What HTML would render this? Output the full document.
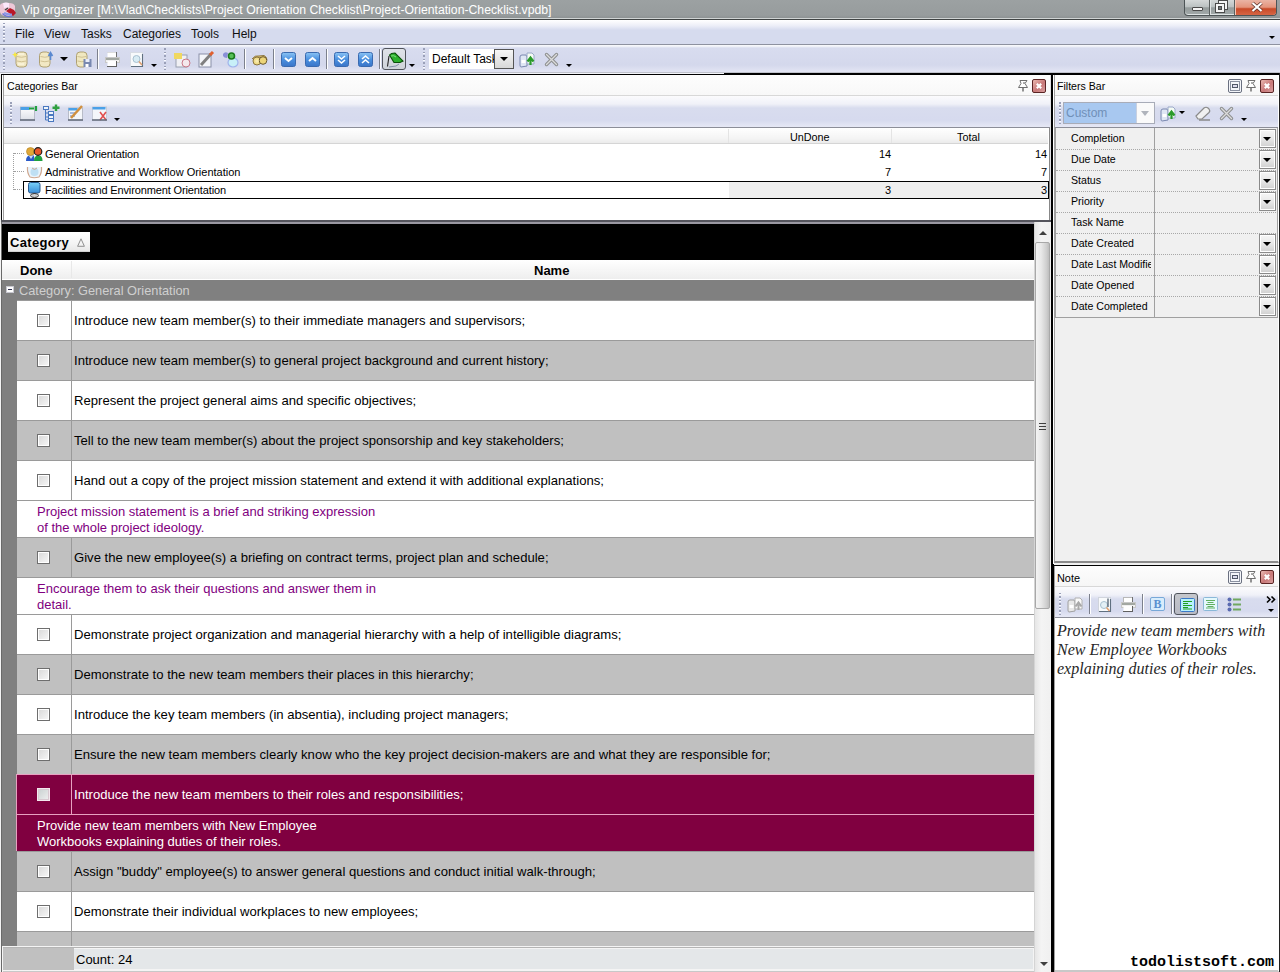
<!DOCTYPE html>
<html><head><meta charset="utf-8">
<style>
*{box-sizing:border-box;margin:0;padding:0}
html,body{width:1280px;height:972px;overflow:hidden;background:#f0f0f0;font-family:"Liberation Sans",sans-serif;font-size:12px;color:#000}
.a{position:absolute}
svg{position:absolute;overflow:visible}
#title{left:0;top:0;width:1280px;height:20px;background:linear-gradient(#9ca1a2,#979c9d 80%,#8e9394 94%);border-bottom:1px solid #404444;box-shadow:inset 0 -1px 0 #d0d4d4}
#menubar{left:0;top:20px;width:1280px;height:25px;background:linear-gradient(#ffffff 0,#f6f6fb 3px,#ebedf7 6px,#d6dbee 10px,#d6dbee 100%);border-bottom:1px solid #8e92a0}
#toolbar{left:0;top:45px;width:1280px;height:28px;background:linear-gradient(#f6f7fb 0,#f6f7fb 1px,#d8dcef 3px,#d4d8ec 20px,#e3e5f4 100%);border-bottom:1px solid #bfc2cc}
.menu{position:absolute;top:27px;font-size:12px;color:#101010}
.grip{position:absolute;width:2px;background:repeating-linear-gradient(#9aa0b8 0,#9aa0b8 1.5px,#fafbff 1.5px,#fafbff 2.2px,transparent 2.2px,transparent 3.5px)}
.sep{position:absolute;width:2px;background:#7c808c;border-right:1px solid #fff}
.dd{position:absolute;width:0;height:0;border-left:3px solid transparent;border-right:3px solid transparent;border-top:3px solid #000}
.txt{position:absolute;white-space:nowrap}
.row{position:absolute;left:17px;width:1017px;border-top:1px solid #9a9a9a}
.vl{position:absolute;left:54px;top:0;width:1px;height:100%}
.cb{position:absolute;left:37px;width:13px;height:13px;border:1px solid #6e6e6e;background:linear-gradient(135deg,#d8d8d8,#f8f8f8);box-shadow:inset 0 0 0 1px #fff}
.gt{position:absolute;left:74px;font-size:13.1px;line-height:15px;white-space:nowrap}
.nt{position:absolute;left:37px;font-size:13px;line-height:16px;white-space:nowrap}
.fbtn{position:absolute;left:1259px;width:17px;height:19px;border:1px solid #8a8a8a;background:linear-gradient(#f6f6f6,#e8e8e8 50%,#d0d0d0);box-shadow:inset 1px 1px 0 #fff,inset -1px -1px 0 #fff}
</style></head><body>
<svg width="0" height="0" style="position:absolute"><defs><linearGradient id="bg1" x1="0" y1="0" x2="0" y2="1"><stop offset="0" stop-color="#8cc4f4"/><stop offset="0.5" stop-color="#4a90e0"/><stop offset="1" stop-color="#3a74c8"/></linearGradient><linearGradient id="gw" x1="0" y1="0" x2="0" y2="1"><stop offset="0" stop-color="#ffffff"/><stop offset="1" stop-color="#dde0e8"/></linearGradient></defs></svg>
<!-- TITLE -->
<div class="a" id="title"></div>
<svg style="left:0px;top:2px" width="17" height="15" viewBox="0 0 17 15">
 <path d="M0 3 Q2 0 9 1 Q14 1 15 4 L15 10 Q12 14 6 14 Q1 14 0 10 Z" fill="#ecc8d8"/>
 <path d="M3 1 Q6 0 9 1 L9 5 L4 6 Z" fill="#fbe8fb"/>
 <path d="M5 8 L8 6" stroke="#404040" stroke-width="1.5"/>
 <path d="M6 9 L10 6 L14 8 L16 11 L13 14 L9 11 Z" fill="#b81828"/>
 <path d="M3 11 Q7 15 13 14 L12 15 Q6 16 2 12 Z" fill="#6a78d8"/>
 <path d="M4 11 Q8 13 12 12.5" stroke="#8a98e8" stroke-width="2" fill="none"/>
</svg>
<div class="txt" style="left:22px;top:3px;font-size:12.24px;color:#fff;letter-spacing:0px">Vip organizer [M:\Vlad\Checklists\Project Orientation Checklist\Project-Orientation-Checklist.vpdb]</div>
<!-- window buttons -->
<div class="a" style="left:1184px;top:0;width:93px;height:16px;border:1px solid #4d5456;border-top:none;border-radius:0 0 4px 4px;background:linear-gradient(#d4d8d8 0,#bcc2c2 45%,#959c9c 52%,#a2a9a9 100%);overflow:hidden;box-shadow:inset 0 -1px 0 #dfe4e4">
  <div class="a" style="left:24px;top:0;width:1px;height:16px;background:#5a6060"></div>
  <div class="a" style="left:25px;top:0;width:1px;height:16px;background:#e0e4e4"></div>
  <div class="a" style="left:49px;top:0;width:1px;height:16px;background:#5a6060"></div>
  <div class="a" style="left:50px;top:0;width:42px;height:16px;background:linear-gradient(#eab4a4 0,#e4947c 45%,#c84a28 55%,#d86a4a 100%);box-shadow:inset 1px 0 0 #f4c8b8"></div>
  <div class="a" style="left:7px;top:7px;width:11px;height:4px;background:#f4f4f4;border:1px solid #4a4a4a;border-radius:1px"></div>
  <div class="a" style="left:34px;top:1px;width:8px;height:8px;border:2px solid #f4f4f4;outline:1px solid #4a4a4a;background:transparent"></div>
  <div class="a" style="left:31px;top:4px;width:8px;height:8px;border:2px solid #f4f4f4;background:#707878;outline:1px solid #4a4a4a;box-shadow:inset 0 0 0 1px #4a4a4a"></div>
  <svg style="left:66px;top:2px" width="12" height="10" viewBox="0 0 12 10"><path d="M1.5 1 L10.5 9 M10.5 1 L1.5 9" stroke="#5a3028" stroke-width="3.6"/><path d="M1.5 1 L10.5 9 M10.5 1 L1.5 9" stroke="#fff" stroke-width="2.2"/></svg>
</div>

<!-- MENU -->
<div class="a" id="menubar"></div>
<div class="grip" style="left:3px;top:23px;height:19px"></div>
<div class="menu" style="left:15px">File</div>
<div class="menu" style="left:44px">View</div>
<div class="menu" style="left:81px">Tasks</div>
<div class="menu" style="left:123px">Categories</div>
<div class="menu" style="left:191px">Tools</div>
<div class="menu" style="left:232px">Help</div>
<div class="dd" style="left:1269px;top:36px"></div>

<!-- TOOLBAR -->
<div class="a" id="toolbar"></div>
<div class="grip" style="left:3px;top:48px;height:22px"></div>
<div class="grip" style="left:164px;top:48px;height:22px"></div>
<div class="grip" style="left:423px;top:48px;height:22px"></div>
<div class="sep" style="left:97px;top:49px;height:20px"></div>
<div class="sep" style="left:244px;top:49px;height:20px"></div>
<div class="sep" style="left:273px;top:49px;height:20px"></div>
<div class="sep" style="left:326px;top:49px;height:20px"></div>
<div class="sep" style="left:379px;top:49px;height:20px"></div>
<div class="dd" style="left:60px;top:57px;border-width:4px 4px 0 4px;border-top-color:#000"></div>
<div class="dd" style="left:151px;top:64px"></div>
<div class="dd" style="left:409px;top:64px"></div>
<div class="dd" style="left:566px;top:64px"></div>
<!-- db icons -->
<svg style="left:12px;top:51px" width="16" height="17" viewBox="0 0 16 17">
 <rect x="4" y="1" width="11" height="15" rx="3.5" fill="#f2e8c4" stroke="#a89868" stroke-width="0.9"/>
 <path d="M5 5.5 Q9.5 7 14 5.5 M5 10 Q9.5 11.5 14 10" stroke="#c8b888" fill="none" stroke-width="0.8"/>
 <path d="M6 3 H12 M6 13 H12" stroke="#fffbe8" stroke-width="1"/>
 <path d="M3 0.5 L4 3 L6.5 3.5 L4 4.5 L3 7 L2 4.5 L0 3.5 L2 3 Z" fill="#f8e840"/>
</svg>
<svg style="left:39px;top:51px" width="14" height="17" viewBox="0 0 14 17">
 <rect x="0.5" y="1" width="10.5" height="15" rx="3.5" fill="#f2e8c4" stroke="#a89868" stroke-width="0.9"/>
 <path d="M1.5 5.5 Q6 7 10 5.5 M1.5 10 Q6 11.5 10 10" stroke="#c8b888" fill="none" stroke-width="0.8"/>
 <path d="M11.5 9 V2.5 M9.5 5 L11.5 1.5 L13.5 5" stroke="#5a88d0" stroke-width="1.6" fill="none"/>
</svg>
<svg style="left:76px;top:51px" width="16" height="17" viewBox="0 0 16 17">
 <rect x="0.5" y="1" width="10.5" height="15" rx="3.5" fill="#f0e8c0" stroke="#a89868" stroke-width="0.9"/>
 <path d="M1.5 5.5 Q6 7 10 5.5 M1.5 10 Q6 11.5 10 10" stroke="#c8b888" fill="none" stroke-width="0.8"/>
 <rect x="7.5" y="8" width="8" height="8" fill="#7888b0"/><rect x="9.5" y="8" width="4" height="3" fill="#e8ecf8"/><rect x="9.5" y="13" width="3" height="3" fill="#fff"/>
</svg>
<svg style="left:105px;top:51px" width="15" height="16" viewBox="0 0 15 16">
 <path d="M2.5 1.5 H11.5 V6" fill="#fff" stroke="#b8b8b8"/><rect x="2.5" y="1.5" width="9" height="5" fill="#fff"/><path d="M11.5 1 V6" stroke="#707070"/>
 <rect x="0.5" y="6.5" width="14" height="5" fill="#f0f0f0" stroke="#c8c8c8"/>
 <path d="M1 8 H14" stroke="#8a9088" stroke-width="1.5"/>
 <rect x="2.5" y="10" width="9" height="5" fill="#fff"/><path d="M2 15.5 H12 M11.5 10 V15.5" stroke="#606060"/>
</svg>
<svg style="left:130px;top:51px" width="14" height="16" viewBox="0 0 14 16">
 <rect x="0.5" y="1.5" width="12" height="14" fill="#f8fafc" stroke="#d8dce4"/>
 <path d="M12.5 3 V15.5 H1" stroke="#607080" stroke-width="1.1" fill="none"/>
 <circle cx="6.5" cy="8" r="3.5" fill="#d8ecf4" stroke="#a8c0d0"/>
 <path d="M9 10.5 L12 14" stroke="#e0a070" stroke-width="1.6"/>
</svg>
<svg style="left:174px;top:51px" width="17" height="17" viewBox="0 0 17 17">
 <rect x="2" y="4" width="11" height="12" fill="#f0f0f4" stroke="#9aa0b0"/>
 <path d="M0 2 H8 V8 H0 Z" fill="#f0d860"/>
 <circle cx="12" cy="12" r="4" fill="#f4e8ec" stroke="#c87888"/>
</svg>
<svg style="left:198px;top:51px" width="17" height="17" viewBox="0 0 17 17">
 <rect x="1" y="3" width="12" height="13" fill="#f4f6fa" stroke="#8a90a8"/>
 <path d="M3 14 L13 3" stroke="#808080" stroke-width="3"/>
 <path d="M12 4 L15 1" stroke="#e06030" stroke-width="3"/>
</svg>
<svg style="left:222px;top:51px" width="17" height="17" viewBox="0 0 17 17">
 <ellipse cx="11" cy="11.5" rx="5" ry="4.5" fill="#c8f0f8" stroke="#a0b4ec" stroke-width="1.2"/>
 <path d="M1 3 Q3 0 6 2 L5 7 Q2 7 1 5 Z" fill="#8a90d8"/>
 <circle cx="9.5" cy="5" r="3" fill="#58c058" stroke="#1a7a1a" stroke-width="1.6"/>
</svg>
<svg style="left:251px;top:54px" width="17" height="12" viewBox="0 0 17 12">
 <path d="M1 5 Q4 1 8 2 L13 1.5 Q16 3 16 6" fill="#e8cc70" stroke="#8a7440" stroke-width="1"/>
 <circle cx="6" cy="7" r="4" fill="#f0dc88" stroke="#8a7440" stroke-width="1"/>
 <circle cx="12" cy="6.5" r="3.8" fill="#ecd478" stroke="#6a5830" stroke-width="1"/>
 <circle cx="6" cy="7" r="1.8" fill="#f8eab0"/>
</svg>
<!-- blue arrow buttons -->
<svg style="left:281px;top:52px" width="15" height="15" viewBox="0 0 15 15"><rect x="0.5" y="0.5" width="14" height="14" rx="2" fill="url(#bg1)" stroke="#3a6ab0"/><path d="M4 6 L7.5 9 L11 6" stroke="#fff" stroke-width="2" fill="none"/></svg>
<svg style="left:305px;top:52px" width="15" height="15" viewBox="0 0 15 15"><rect x="0.5" y="0.5" width="14" height="14" rx="2" fill="url(#bg1)" stroke="#3a6ab0"/><path d="M4 9 L7.5 6 L11 9" stroke="#fff" stroke-width="2" fill="none"/></svg>
<svg style="left:334px;top:52px" width="15" height="15" viewBox="0 0 15 15"><rect x="0.5" y="0.5" width="14" height="14" rx="2" fill="url(#bg1)" stroke="#3a6ab0"/><path d="M4 4 L7.5 7 L11 4 M4 8 L7.5 11 L11 8" stroke="#fff" stroke-width="1.6" fill="none"/></svg>
<svg style="left:358px;top:52px" width="15" height="15" viewBox="0 0 15 15"><rect x="0.5" y="0.5" width="14" height="14" rx="2" fill="url(#bg1)" stroke="#3a6ab0"/><path d="M4 7 L7.5 4 L11 7 M4 11 L7.5 8 L11 11" stroke="#fff" stroke-width="1.6" fill="none"/></svg>
<!-- pressed green button -->
<div class="a" style="left:382px;top:48px;width:24px;height:22px;border:1px solid #50545c;border-radius:3px;background:linear-gradient(#dfe2e8,#cfd3da)"></div>
<svg style="left:386px;top:51px" width="18" height="17" viewBox="0 0 18 17">
 <path d="M3.5 4 Q5 2 9 2 L17 10 L14 11.5 L8 11.5 Z" fill="#2cb02c" stroke="#0a500a" stroke-width="1.1"/>
 <path d="M5 5 Q8 4 10 6" stroke="#80e080" fill="none"/>
 <path d="M3 5 L1.5 15.5" stroke="#202020" stroke-width="1.1"/>
 <path d="M3 16 L10 15 L13 13" stroke="#8090a8" fill="none"/>
</svg>
<!-- combo -->
<div class="a" style="left:429px;top:49px;width:85px;height:20px;background:#fff;overflow:hidden">
  <div class="txt" style="left:3px;top:3px;font-size:12px">Default Task</div>
</div>
<div class="a" style="left:494px;top:49px;width:20px;height:20px;border:1px solid #555;background:linear-gradient(#f6f6f6,#d8d8d8)"></div>
<div class="dd" style="left:500px;top:57px;border-width:4px 4px 0 4px"></div>
<svg style="left:519px;top:51px" width="17" height="17" viewBox="0 0 17 17">
 <path d="M1 6 Q1 4 3 4 L7 4 L8 6 L8 15 L2 16 Q1 16 1 14 Z" fill="#dfe6f4" stroke="#7a88b0"/>
 <rect x="2.5" y="9" width="4" height="3" fill="#fff"/>
 <path d="M8 2 L13 2 L15 4 L15 13 L8 13 Z" fill="#f4fbf4" stroke="#9aa8c8"/>
 <path d="M11.5 14 V8.5 M8.5 10.5 L11.5 6.5 L14.5 10.5" stroke="#2a9a2a" stroke-width="2.2" fill="none"/>
</svg>
<svg style="left:545px;top:53px" width="13" height="13" viewBox="0 0 13 13"><path d="M1.5 1.5 L11.5 11.5 M11.5 1.5 L1.5 11.5" stroke="#8e9090" stroke-width="3.4" stroke-linecap="round"/><path d="M1.5 1.5 L11.5 11.5 M11.5 1.5 L1.5 11.5" stroke="#dcdcdc" stroke-width="1.3" stroke-linecap="round"/></svg>


<!-- ============ CATEGORIES PANEL ============ -->
<div class="a" style="left:0;top:73px;width:1053px;height:1px;background:#f4f5fa"></div><div class="a" style="left:1px;top:74px;width:1052px;height:1px;background:#000"></div>
<div class="a" style="left:724px;top:73px;width:556px;height:1px;background:#000"></div>
<div class="a" style="left:1px;top:75px;width:1px;height:147px;background:#101010"></div>
<div class="a" style="left:1051px;top:73px;width:2px;height:899px;background:#000"></div>
<div class="a" style="left:2px;top:75px;width:1049px;height:146px;background:#fff;border-left:1px solid #fff;border-right:1px solid #e0e0e4;box-shadow:inset 1px 0 0 #a0a0a0, inset -1px 0 0 #888"></div>
<!-- caption -->
<div class="a" style="left:4px;top:75px;width:1046px;height:21px;background:linear-gradient(#fdfdfd,#f8f8f8);border-bottom:1px solid #d8d8d8"></div>
<div class="txt" style="left:7px;top:80px;font-size:10.6px">Categories Bar</div>
<svg style="left:1017px;top:80px" width="12" height="12" viewBox="0 0 12 12"><path d="M3 0.5 H10 L8 3.5 L10.5 7.5 H1.5 L4 3.5 Z" fill="#fff" stroke="#707070"/><path d="M6 7.5 V11.5" stroke="#707070" stroke-width="1.5"/><circle cx="7" cy="3" r="1" fill="#909090"/></svg>
<div class="a" style="left:1032px;top:79px;width:14px;height:14px;border:1px solid #5a2424;border-radius:2px;background:linear-gradient(135deg,#eab8b0,#c87878 55%,#d8a0a0)"></div>
<svg style="left:1035px;top:82px" width="8" height="8" viewBox="0 0 8 8"><path d="M1.8 1.8 L6.2 6.2 M6.2 1.8 L1.8 6.2" stroke="#fff" stroke-width="2.2"/></svg>
<!-- toolbar -->
<div class="a" style="left:4px;top:96px;width:1046px;height:32px;background:linear-gradient(#fbfbfd 0,#f0f1f8 8px,#d8dcee 12px,#d6daee 24px,#e6e8f5 31px);border-bottom:1px solid #8c8e98"></div>
<div class="grip" style="left:10px;top:102px;height:22px"></div>
<svg style="left:20px;top:104px" width="16" height="17" viewBox="0 0 16 17">
 <rect x="0.5" y="3" width="14" height="13" fill="url(#gw)" stroke="#b8bcc8"/>
 <rect x="0.5" y="3" width="9" height="3" fill="#4aa0e8"/>
 <path d="M16 2 V7 M9 4.5 H14" stroke="#20a040" stroke-width="2.2"/>
 <path d="M0 16 H15" stroke="#606878" stroke-width="1.5"/>
</svg>
<svg style="left:43px;top:104px" width="17" height="18" viewBox="0 0 17 18">
 <g fill="#eef4fa" stroke="#4a78c0" stroke-width="1"><rect x="0.5" y="2.5" width="5" height="3"/><rect x="5.5" y="7.5" width="5" height="3"/><rect x="5.5" y="11.5" width="5" height="3"/><rect x="5.5" y="14.5" width="5" height="3"/></g>
 <path d="M2.5 5.5 V16 H5.5 M2.5 9 H5.5 M2.5 13 H5.5" stroke="#4a78c0" fill="none"/>
 <path d="M13 0.5 V7 M9.5 3.8 H16.5" stroke="#30a040" stroke-width="2.4"/>
</svg>
<svg style="left:68px;top:104px" width="16" height="17" viewBox="0 0 16 17">
 <rect x="0.5" y="4" width="14" height="12" fill="#f4f6fa" stroke="#b8bcc8"/>
 <rect x="0.5" y="4" width="9" height="2.5" fill="#4aa0e8"/>
 <path d="M2 9 H7 M2 12 H7" stroke="#6080c0"/>
 <path d="M3 14 L14 2" stroke="#d09040" stroke-width="2.5"/>
 <path d="M0 16 H15" stroke="#606878" stroke-width="1.5"/>
</svg>
<svg style="left:92px;top:104px" width="16" height="17" viewBox="0 0 16 17">
 <rect x="0.5" y="3" width="14" height="13" fill="#f4f6fa" stroke="#c8ccd8"/>
 <rect x="0.5" y="3" width="13" height="2.5" fill="#4aa0e8"/>
 <path d="M8 8 L14 16 M14 8 L8 16" stroke="#e05050" stroke-width="1.6"/>
 <path d="M0 16 H15" stroke="#606878" stroke-width="1.5"/>
</svg>
<div class="dd" style="left:114px;top:118px"></div>
<!-- tree header -->
<div class="a" style="left:4px;top:128px;width:1044px;height:16px;background:linear-gradient(#ffffff,#f4f4f4 70%,#ebebeb);border-bottom:1px solid #d5d5d5"></div>
<div class="a" style="left:728px;top:129px;width:1px;height:14px;background:#e4e4e4"></div>
<div class="a" style="left:891px;top:129px;width:1px;height:14px;background:#e4e4e4"></div>
<div class="txt" style="left:790px;top:131px;font-size:10.8px">UnDone</div>
<div class="txt" style="left:957px;top:131px;font-size:10.8px">Total</div>
<!-- tree lines -->
<div class="a" style="left:13px;top:153px;width:1px;height:37px;border-left:1px dotted #a0a0a0"></div>
<div class="a" style="left:14px;top:153px;width:10px;height:1px;border-top:1px dotted #a0a0a0"></div>
<div class="a" style="left:14px;top:171px;width:10px;height:1px;border-top:1px dotted #a0a0a0"></div>
<div class="a" style="left:14px;top:189px;width:10px;height:1px;border-top:1px dotted #a0a0a0"></div>
<!-- selection -->
<div class="a" style="left:23px;top:181px;width:1026px;height:18px;border:1px solid #000;background:#fff"></div>
<div class="a" style="left:729px;top:182px;width:319px;height:16px;background:#efefef"></div>
<!-- icons -->
<svg style="left:26px;top:147px" width="17" height="15" viewBox="0 0 17 15">
 <path d="M0 14 Q0 8.5 4 8.5 L8 8.5 Q8.5 14 8.5 14 Z" fill="#2a5ac8"/>
 <path d="M8 14 Q8 8.5 12 8.5 L13 8.5 Q16.5 8.5 16.5 14 Z" fill="#20a040"/>
 <path d="M3 9 L5 12 L7 9" fill="#c8d8f0"/>
 <circle cx="4.5" cy="4.5" r="4" fill="#e0a838" stroke="#b08020" stroke-width="0.6"/>
 <circle cx="12" cy="4.5" r="3.8" fill="#e8582a" stroke="#202020" stroke-width="1.2"/>
</svg>
<svg style="left:26px;top:165px" width="17" height="14" viewBox="0 0 17 14">
 <path d="M1.5 2 Q1 8 4 12 Q8 13.5 13 12 Q16 8 15.5 2" fill="#e8f4fc" stroke="#d0a890" stroke-width="1.2"/>
 <circle cx="8.5" cy="7" r="4" fill="#bfe0f4"/>
 <path d="M6 3 Q8.5 6 11 3" stroke="#d0a890" fill="none"/>
</svg>
<svg style="left:28px;top:182px" width="13" height="16" viewBox="0 0 13 16">
 <defs><linearGradient id="scr" x1="0" y1="0" x2="0" y2="1"><stop offset="0" stop-color="#78d0f8"/><stop offset="1" stop-color="#3a8ed8"/></linearGradient></defs>
 <rect x="0.5" y="0.5" width="11.5" height="10.5" rx="2" fill="url(#scr)" stroke="#2a5a90"/>
 <ellipse cx="6.5" cy="13.5" rx="4" ry="2" fill="#d0d0d0" stroke="#404040"/>
 <path d="M6.5 11 V12" stroke="#404040" stroke-width="2"/>
</svg>
<div class="txt" style="left:45px;top:148px;font-size:11px;letter-spacing:-0.1px">General Orientation</div>
<div class="txt" style="left:45px;top:166px;font-size:11px">Administrative and Workflow Orientation</div>
<div class="txt" style="left:45px;top:184px;font-size:11px;letter-spacing:-0.13px">Facilities and Environment Orientation</div>
<div class="txt" style="left:879px;top:148px;font-size:11px">14</div>
<div class="txt" style="left:1035px;top:148px;font-size:11px">14</div>
<div class="txt" style="left:885px;top:166px;font-size:11px">7</div>
<div class="txt" style="left:1041px;top:166px;font-size:11px">7</div>
<div class="txt" style="left:885px;top:184px;font-size:11px">3</div>
<div class="txt" style="left:1041px;top:184px;font-size:11px">3</div>
<!-- bottom border -->
<div class="a" style="left:1px;top:220px;width:1050px;height:4px;background:linear-gradient(#55555d 0,#55555d 50%,#9a98a2 50%,#9a98a2 100%)"></div>


<!-- ============ MAIN GRID ============ -->
<div class="a" style="left:0;top:222px;width:1px;height:750px;background:#f4f4f4"></div>
<div class="a" style="left:1px;top:222px;width:1px;height:750px;background:#6a6a6a"></div>
<div class="a" style="left:2px;top:224px;width:1032px;height:36px;background:#000"></div>
<div class="a" style="left:8px;top:232px;width:82px;height:20px;background:linear-gradient(#fff,#f4f4f4 60%,#e8e8e8);border-bottom:1px solid #d0d0d0"></div>
<div class="txt" style="left:10px;top:235px;font-size:13px;font-weight:bold;letter-spacing:0.35px">Category</div>
<svg style="left:77px;top:238px" width="8" height="9" viewBox="0 0 8 9"><path d="M4 0.8 L7.4 8.3 H0.6 Z" fill="none" stroke="#909090"/></svg>
<div class="a" style="left:2px;top:260px;width:1032px;height:20px;background:linear-gradient(#ffffff,#f8f8f8 40%,#eeeeee);border-bottom:1px solid #d8d8d8"></div>
<div class="a" style="left:2px;top:279px;width:1032px;height:1px;background:#fff"></div>
<div class="a" style="left:71px;top:261px;width:1px;height:17px;background:#e8e8e8"></div>
<div class="txt" style="left:20px;top:263px;font-size:13px;font-weight:bold">Done</div>
<div class="txt" style="left:534px;top:263px;font-size:13px;font-weight:bold">Name</div>
<div class="a" style="left:2px;top:280px;width:1032px;height:20px;background:#808080"></div>
<div class="a" style="left:6px;top:286px;width:8px;height:7px;background:#fff;border:1px solid #c8c8d0"></div>
<div class="a" style="left:8px;top:289px;width:4px;height:1px;background:#303050"></div>
<div class="txt" style="left:19px;top:283px;font-size:12.8px;color:#cfcfcf">Category: General Orientation</div>
<div class="a" style="left:2px;top:300px;width:15px;height:646px;background:#808080"></div>
<div class="row" style="top:300px;height:40px;background:#fff;border-top-color:#9a9a9a"><div class="vl" style="background:#9a9a9a"></div></div>
<div class="cb" style="top:314px"></div>
<div class="gt" style="top:313px;color:#000">Introduce new team member(s) to their immediate managers and supervisors;</div>
<div class="row" style="top:340px;height:40px;background:#c0c0c0;border-top-color:#9a9a9a"><div class="vl" style="background:#9a9a9a"></div></div>
<div class="cb" style="top:354px"></div>
<div class="gt" style="top:353px;color:#000">Introduce new team member(s) to general project background and current history;</div>
<div class="row" style="top:380px;height:40px;background:#fff;border-top-color:#9a9a9a"><div class="vl" style="background:#9a9a9a"></div></div>
<div class="cb" style="top:394px"></div>
<div class="gt" style="top:393px;color:#000">Represent the project general aims and specific objectives;</div>
<div class="row" style="top:420px;height:40px;background:#c0c0c0;border-top-color:#9a9a9a"><div class="vl" style="background:#9a9a9a"></div></div>
<div class="cb" style="top:434px"></div>
<div class="gt" style="top:433px;color:#000">Tell to the new team member(s) about the project sponsorship and key stakeholders;</div>
<div class="row" style="top:460px;height:40px;background:#fff;border-top-color:#9a9a9a"><div class="vl" style="background:#9a9a9a"></div></div>
<div class="cb" style="top:474px"></div>
<div class="gt" style="top:473px;color:#000">Hand out a copy of the project mission statement and extend it with additional explanations;</div>
<div class="row" style="top:500px;height:37px;background:#fff;border-top-color:#9a9a9a"></div>
<div class="nt" style="top:504px;color:#800080">Project mission statement is a brief and striking expression<br>of the whole project ideology.</div>
<div class="row" style="top:537px;height:40px;background:#c0c0c0;border-top-color:#9a9a9a"><div class="vl" style="background:#9a9a9a"></div></div>
<div class="cb" style="top:551px"></div>
<div class="gt" style="top:550px;color:#000">Give the new employee(s) a briefing on contract terms, project plan and schedule;</div>
<div class="row" style="top:577px;height:37px;background:#fff;border-top-color:#9a9a9a"></div>
<div class="nt" style="top:581px;color:#800080">Encourage them to ask their questions and answer them in<br>detail.</div>
<div class="row" style="top:614px;height:40px;background:#fff;border-top-color:#9a9a9a"><div class="vl" style="background:#9a9a9a"></div></div>
<div class="cb" style="top:628px"></div>
<div class="gt" style="top:627px;color:#000">Demonstrate project organization and managerial hierarchy with a help of intelligible diagrams;</div>
<div class="row" style="top:654px;height:40px;background:#c0c0c0;border-top-color:#9a9a9a"><div class="vl" style="background:#9a9a9a"></div></div>
<div class="cb" style="top:668px"></div>
<div class="gt" style="top:667px;color:#000">Demonstrate to the new team members their places in this hierarchy;</div>
<div class="row" style="top:694px;height:40px;background:#fff;border-top-color:#9a9a9a"><div class="vl" style="background:#9a9a9a"></div></div>
<div class="cb" style="top:708px"></div>
<div class="gt" style="top:707px;color:#000">Introduce the key team members (in absentia), including project managers;</div>
<div class="row" style="top:734px;height:40px;background:#c0c0c0;border-top-color:#9a9a9a"><div class="vl" style="background:#9a9a9a"></div></div>
<div class="cb" style="top:748px"></div>
<div class="gt" style="top:747px;color:#000">Ensure the new team members clearly know who the key project decision-makers are and what they are responsible for;</div>
<div class="row" style="top:774px;height:40px;background:#800040;border-top-color:#e8a0c0"><div class="vl" style="background:#e8a0c0"></div></div>
<div class="a" style="left:16px;top:774px;width:1px;height:77px;background:#e8a0c0"></div>
<div class="cb" style="top:788px;border-color:#f4e8ee;box-shadow:inset 0 0 0 1px #d8c8d0;background:linear-gradient(135deg,#c8d0d0,#f0f0f0)"></div>
<div class="gt" style="top:787px;color:#fff">Introduce the new team members to their roles and responsibilities;</div>
<div class="row" style="top:814px;height:37px;background:#800040;border-top-color:#e8a0c0"></div>
<div class="nt" style="top:818px;color:#fff">Provide new team members with New Employee<br>Workbooks explaining duties of their roles.</div>
<div class="row" style="top:851px;height:40px;background:#c0c0c0;border-top-color:#9a9a9a"><div class="vl" style="background:#9a9a9a"></div></div>
<div class="cb" style="top:865px"></div>
<div class="gt" style="top:864px;color:#000">Assign &quot;buddy&quot; employee(s) to answer general questions and conduct initial walk-through;</div>
<div class="row" style="top:891px;height:40px;background:#fff;border-top-color:#9a9a9a"><div class="vl" style="background:#9a9a9a"></div></div>
<div class="cb" style="top:905px"></div>
<div class="gt" style="top:904px;color:#000">Demonstrate their individual workplaces to new employees;</div>
<div class="row" style="top:931px;height:40px;background:#c0c0c0;border-top-color:#9a9a9a"><div class="vl" style="background:#9a9a9a"></div></div>
<!-- footer -->
<div class="a" style="left:2px;top:946px;width:1032px;height:26px;background:#f4f4f4"></div>
<div class="a" style="left:3px;top:947px;width:1031px;height:1px;background:#b4b4b4"></div>
<div class="a" style="left:3px;top:948px;width:71px;height:22px;background:#c0c0c0"></div>
<div class="a" style="left:74px;top:949px;width:959px;height:20px;background:#e4e7e9"></div>
<div class="a" style="left:3px;top:971px;width:1031px;height:1px;background:#c8c8c8"></div>
<div class="txt" style="left:76px;top:952px;font-size:13px">Count: 24</div>
<!-- scrollbar -->
<div class="a" style="left:1034px;top:222px;width:17px;height:750px;background:linear-gradient(90deg,#e6e6e6,#f4f4f4 40%,#f0f0f0);border-left:1px solid #d4d4d4"></div>
<div class="a" style="left:1039px;top:231px;width:0;height:0;border-left:4px solid transparent;border-right:4px solid transparent;border-bottom:4px solid #404040"></div>
<div class="a" style="left:1035px;top:242px;width:15px;height:367px;border:1px solid #a8a8a8;border-radius:2px;background:linear-gradient(90deg,#f4f4f4,#e8e8e8 40%,#cfcfcf 80%,#bdbdbd)"></div>
<div class="a" style="left:1039px;top:423px;width:7px;height:7px;background:repeating-linear-gradient(#404040 0,#404040 1px,transparent 1px,transparent 3px)"></div>
<div class="dd" style="left:1040px;top:962px;border-width:4px 4px 0 4px;border-top-color:#404040"></div>


<!-- ============ FILTERS PANEL ============ -->
<div class="a" style="left:1053px;top:73px;width:227px;height:2px;background:#000"></div>
<div class="a" style="left:1053px;top:75px;width:1px;height:490px;background:#fff"></div>
<div class="a" style="left:1054px;top:75px;width:225px;height:488px;background:#f0f0f0;border:1px solid #a0a0a0;border-top:none;border-right-color:#fff;border-bottom:2px solid #8a8a8a"></div><div class="a" style="left:1279px;top:73px;width:1px;height:899px;background:#202020"></div>
<div class="a" style="left:1055px;top:75px;width:223px;height:21px;background:linear-gradient(#fdfdfd,#f6f6f6);border-bottom:1px solid #d8d8d8"></div>
<div class="txt" style="left:1057px;top:80px;font-size:10.6px">Filters Bar</div>
<svg style="left:1228px;top:79px" width="14" height="14" viewBox="0 0 14 14"><rect x="0.5" y="0.5" width="13" height="13" rx="1.5" fill="#f4f6fa" stroke="#6a7080"/><rect x="2.5" y="2.5" width="9" height="9" fill="none" stroke="#8a90a0"/><rect x="4.5" y="5.5" width="5" height="3" fill="#dde" stroke="#505868"/></svg>
<svg style="left:1245px;top:80px" width="12" height="12" viewBox="0 0 12 12"><path d="M3 0.5 H10 L8 3.5 L10.5 7.5 H1.5 L4 3.5 Z" fill="#fff" stroke="#707070"/><path d="M6 7.5 V11.5" stroke="#707070" stroke-width="1.5"/><circle cx="7" cy="3" r="1" fill="#909090"/></svg>
<div class="a" style="left:1260px;top:79px;width:14px;height:14px;border:1px solid #5a2424;border-radius:2px;background:linear-gradient(135deg,#eab8b0,#c87878 55%,#d8a0a0)"></div>
<svg style="left:1263px;top:82px" width="8" height="8" viewBox="0 0 8 8"><path d="M1.8 1.8 L6.2 6.2 M6.2 1.8 L1.8 6.2" stroke="#fff" stroke-width="2.2"/></svg>
<div class="a" style="left:1055px;top:96px;width:223px;height:32px;background:linear-gradient(#fbfbfd 0,#f0f1f8 8px,#d8dcee 12px,#d6daee 24px,#e6e8f5 31px);border-bottom:1px solid #8c8e98"></div>
<div class="grip" style="left:1059px;top:102px;height:22px"></div>
<div class="a" style="left:1063px;top:102px;width:92px;height:22px;border:1px solid #a8acb8;background:#a8c8f0"></div>
<div class="a" style="left:1136px;top:103px;width:18px;height:20px;background:#fafafa;border-left:1px solid #c8d0e0"></div>
<div class="dd" style="left:1141px;top:111px;border-width:5px 4px 0 4px;border-top-color:#b0b4bc"></div>
<div class="txt" style="left:1066px;top:106px;font-size:12px;color:#7090b8">Custom</div>
<svg style="left:1160px;top:105px" width="17" height="17" viewBox="0 0 17 17">
 <path d="M1 6 Q1 4 3 4 L7 4 L8 6 L8 15 L2 16 Q1 16 1 14 Z" fill="#dfe6f4" stroke="#7a88b0"/>
 <rect x="2.5" y="9" width="4" height="3" fill="#fff"/>
 <path d="M8 2 L13 2 L15 4 L15 13 L8 13 Z" fill="#f4fbf4" stroke="#9aa8c8"/>
 <path d="M11.5 14 V8.5 M8.5 10.5 L11.5 6.5 L14.5 10.5" stroke="#2a9a2a" stroke-width="2.2" fill="none"/>
</svg>
<div class="dd" style="left:1179px;top:111px"></div>
<svg style="left:1194px;top:106px" width="17" height="15" viewBox="0 0 17 15"><path d="M2 10 L10 2 Q12 0.5 14 2 L15 3 Q16.5 5 15 6.5 L8 13 H4 Z" fill="#f0f0f0" stroke="#8a8a8a" stroke-width="1.2"/><path d="M5 14 H16" stroke="#8a8a8a" stroke-width="1.5"/></svg>
<svg style="left:1220px;top:107px" width="13" height="13" viewBox="0 0 13 13"><path d="M1.5 1.5 L11.5 11.5 M11.5 1.5 L1.5 11.5" stroke="#8e9090" stroke-width="3.4" stroke-linecap="round"/><path d="M1.5 1.5 L11.5 11.5 M11.5 1.5 L1.5 11.5" stroke="#dcdcdc" stroke-width="1.3" stroke-linecap="round"/></svg>
<div class="dd" style="left:1241px;top:118px"></div>
<!-- filter grid -->
<div class="a" style="left:1055px;top:128px;width:223px;height:190px;border:1px solid #a0a0a0;border-top:none;background:#f0f0f0"></div>
<div class="a" style="left:1154px;top:128px;width:1px;height:189px;background:#a0a0a0"></div>
<div class="txt" style="left:1071px;top:132px;font-size:10.6px;width:82px;overflow:hidden">Completion</div>
<div class="fbtn" style="top:129px"></div><div class="dd" style="left:1263px;top:137px;border-width:4px 4px 0 4px"></div>
<div class="txt" style="left:1071px;top:153px;font-size:10.6px;width:82px;overflow:hidden">Due Date</div>
<div class="a" style="left:1056px;top:149px;width:220px;height:1px;border-top:1px dotted #a8a8a8"></div>
<div class="fbtn" style="top:150px"></div><div class="dd" style="left:1263px;top:158px;border-width:4px 4px 0 4px"></div>
<div class="txt" style="left:1071px;top:174px;font-size:10.6px;width:82px;overflow:hidden">Status</div>
<div class="a" style="left:1056px;top:170px;width:220px;height:1px;border-top:1px dotted #a8a8a8"></div>
<div class="fbtn" style="top:171px"></div><div class="dd" style="left:1263px;top:179px;border-width:4px 4px 0 4px"></div>
<div class="txt" style="left:1071px;top:195px;font-size:10.6px;width:82px;overflow:hidden">Priority</div>
<div class="a" style="left:1056px;top:191px;width:220px;height:1px;border-top:1px dotted #a8a8a8"></div>
<div class="fbtn" style="top:192px"></div><div class="dd" style="left:1263px;top:200px;border-width:4px 4px 0 4px"></div>
<div class="txt" style="left:1071px;top:216px;font-size:10.6px;width:82px;overflow:hidden">Task Name</div>
<div class="a" style="left:1056px;top:212px;width:220px;height:1px;border-top:1px dotted #a8a8a8"></div>
<div class="txt" style="left:1071px;top:237px;font-size:10.6px;width:82px;overflow:hidden">Date Created</div>
<div class="a" style="left:1056px;top:233px;width:220px;height:1px;border-top:1px dotted #a8a8a8"></div>
<div class="fbtn" style="top:234px"></div><div class="dd" style="left:1263px;top:242px;border-width:4px 4px 0 4px"></div>
<div class="txt" style="left:1071px;top:258px;font-size:10.6px;width:80px;overflow:hidden">Date Last Modifie</div>
<div class="a" style="left:1056px;top:254px;width:220px;height:1px;border-top:1px dotted #a8a8a8"></div>
<div class="fbtn" style="top:255px"></div><div class="dd" style="left:1263px;top:263px;border-width:4px 4px 0 4px"></div>
<div class="txt" style="left:1071px;top:279px;font-size:10.6px;width:82px;overflow:hidden">Date Opened</div>
<div class="a" style="left:1056px;top:275px;width:220px;height:1px;border-top:1px dotted #a8a8a8"></div>
<div class="fbtn" style="top:276px"></div><div class="dd" style="left:1263px;top:284px;border-width:4px 4px 0 4px"></div>
<div class="txt" style="left:1071px;top:300px;font-size:10.6px;width:82px;overflow:hidden">Date Completed</div>
<div class="a" style="left:1056px;top:296px;width:220px;height:1px;border-top:1px dotted #a8a8a8"></div>
<div class="fbtn" style="top:297px"></div><div class="dd" style="left:1263px;top:305px;border-width:4px 4px 0 4px"></div>

<!-- ============ NOTE PANEL ============ -->
<div class="a" style="left:1052px;top:565px;width:228px;height:1px;background:#000"></div>
<div class="a" style="left:1052px;top:564px;width:2px;height:408px;background:#000"></div>
<div class="a" style="left:1054px;top:566px;width:225px;height:406px;background:#fff;border:1px solid #a0a0a0;border-top:none;border-right-color:#fff"></div>
<div class="a" style="left:1055px;top:566px;width:223px;height:21px;background:linear-gradient(#fdfdfd,#f6f6f6);border-bottom:1px solid #d8d8d8"></div>
<div class="txt" style="left:1057px;top:572px;font-size:10.9px">Note</div>
<svg style="left:1228px;top:570px" width="14" height="14" viewBox="0 0 14 14"><rect x="0.5" y="0.5" width="13" height="13" rx="1.5" fill="#f4f6fa" stroke="#6a7080"/><rect x="2.5" y="2.5" width="9" height="9" fill="none" stroke="#8a90a0"/><rect x="4.5" y="5.5" width="5" height="3" fill="#dde" stroke="#505868"/></svg>
<svg style="left:1245px;top:571px" width="12" height="12" viewBox="0 0 12 12"><path d="M3 0.5 H10 L8 3.5 L10.5 7.5 H1.5 L4 3.5 Z" fill="#fff" stroke="#707070"/><path d="M6 7.5 V11.5" stroke="#707070" stroke-width="1.5"/><circle cx="7" cy="3" r="1" fill="#909090"/></svg>
<div class="a" style="left:1260px;top:570px;width:14px;height:14px;border:1px solid #5a2424;border-radius:2px;background:linear-gradient(135deg,#eab8b0,#c87878 55%,#d8a0a0)"></div>
<svg style="left:1263px;top:573px" width="8" height="8" viewBox="0 0 8 8"><path d="M1.8 1.8 L6.2 6.2 M6.2 1.8 L1.8 6.2" stroke="#fff" stroke-width="2.2"/></svg>
<div class="a" style="left:1055px;top:587px;width:223px;height:31px;background:linear-gradient(#fbfbfd 0,#f0f1f8 8px,#d8dcee 12px,#d6daee 24px,#e6e8f5 30px);border-bottom:1px solid #8c8e98"></div>
<div class="grip" style="left:1059px;top:593px;height:22px"></div>
<svg style="left:1067px;top:596px" width="17" height="17" viewBox="0 0 17 17">
 <path d="M1 6 Q1 4 3 4 L7 4 L8 6 L8 15 L2 16 Q1 16 1 14 Z" fill="#e8e8e8" stroke="#a0a0a0"/>
 <rect x="2.5" y="9" width="4" height="3" fill="#fff"/>
 <path d="M8 2 L13 2 L15 4 L15 13 L8 13 Z" fill="#fafafa" stroke="#b0b0b0"/>
 <path d="M11.5 14 V8.5 M8.5 10.5 L11.5 6.5 L14.5 10.5" stroke="#a8a8a8" stroke-width="2" fill="none"/>
</svg>
<div class="sep" style="left:1089px;top:594px;height:20px"></div>
<svg style="left:1098px;top:596px" width="14" height="17" viewBox="0 0 14 17">
 <rect x="0.5" y="1.5" width="12" height="14" fill="#f8fafc" stroke="#d0d4dc"/>
 <path d="M12.5 3 V15.5 H1" stroke="#607080" stroke-width="1.1" fill="none"/>
 <circle cx="6" cy="9" r="3.5" fill="#e4f0f6" stroke="#a8c0d0"/>
 <path d="M10 2.5 V11" stroke="#506070" stroke-width="1.3"/>
 <path d="M8.5 11.5 L11.5 15" stroke="#e0a070" stroke-width="1.6"/>
</svg>
<svg style="left:1121px;top:596px" width="15" height="16" viewBox="0 0 15 16">
 <rect x="2.5" y="1.5" width="9" height="5" fill="#fff" stroke="#b8b8b8"/><path d="M11.5 1 V6" stroke="#707070"/>
 <rect x="0.5" y="6.5" width="14" height="5" fill="#f0f0f0" stroke="#c8c8c8"/>
 <path d="M1 8 H14" stroke="#8a9088" stroke-width="1.5"/>
 <rect x="2.5" y="10" width="9" height="5" fill="#fff"/><path d="M2 15.5 H12 M11.5 10 V15.5" stroke="#606060"/>
</svg>
<div class="sep" style="left:1142px;top:594px;height:20px"></div>
<svg style="left:1150px;top:597px" width="15" height="14" viewBox="0 0 15 14"><rect x="0.5" y="0.5" width="14" height="13" rx="1.5" fill="#d8ecfc" stroke="#78a8d8"/><text x="7.5" y="11" font-family="Liberation Serif" font-weight="bold" font-size="12" text-anchor="middle" fill="#5a90d0">B</text></svg>
<div class="sep" style="left:1171px;top:594px;height:20px"></div>
<div class="a" style="left:1174px;top:593px;width:24px;height:22px;border:1px solid #50545c;border-radius:3px;background:linear-gradient(#c4c6cc,#b8bac4)"></div>
<svg style="left:1180px;top:598px" width="15" height="14" viewBox="0 0 15 14"><rect x="0.5" y="0.5" width="14" height="13" rx="1" fill="#b8f0fc" stroke="#3a78c8"/><path d="M3 3.5 H12 M3 5.5 H8 M3 7.5 H12 M3 9.5 H8 M3 11 H12" stroke="#20a020" stroke-width="1.1"/></svg>
<svg style="left:1203px;top:597px" width="15" height="14" viewBox="0 0 15 14"><rect x="0.5" y="0.5" width="14" height="13" rx="1" fill="#e4f8fc" stroke="#8ab8d8"/><path d="M3 3.5 H12 M4.5 5.5 H10.5 M3 7.5 H12 M4.5 9.5 H10.5 M3 11 H12" stroke="#60b060" stroke-width="1.1"/></svg>
<svg style="left:1227px;top:597px" width="15" height="15" viewBox="0 0 15 15"><circle cx="2.5" cy="2.5" r="2" fill="#5a6ab0"/><circle cx="2.5" cy="7.5" r="2" fill="#5a6ab0"/><circle cx="2.5" cy="12.5" r="2" fill="#5a6ab0"/><path d="M6 2.5 H14 M6 7.5 H14 M6 12.5 H14" stroke="#70a860" stroke-width="2"/></svg>
<svg style="left:1266px;top:596px" width="10" height="7" viewBox="0 0 10 7"><path d="M1 0.5 L4 3.5 L1 6.5 M5.5 0.5 L8.5 3.5 L5.5 6.5" stroke="#000" stroke-width="1.6" fill="none"/></svg>
<div class="dd" style="left:1268px;top:609px"></div>
<div class="txt" style="left:1057px;top:621px;font-family:'Liberation Serif',serif;font-style:italic;font-size:16px;line-height:19px;color:#262626">Provide new team members with<br>New Employee Workbooks<br>explaining duties of their roles.</div>
<div class="txt" style="left:1130px;top:954px;font-family:'Liberation Mono',monospace;font-weight:bold;font-size:15px;color:#000">todolistsoft.com</div>
<div class="a" style="left:1055px;top:970px;width:223px;height:2px;background:#c8c8c8"></div>

</body></html>
